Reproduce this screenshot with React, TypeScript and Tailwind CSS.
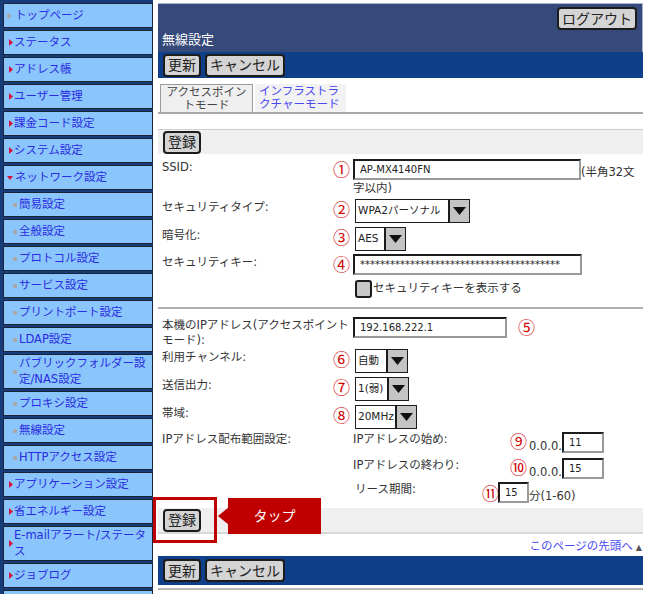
import React from "react";

type MenuKind = "top" | "main" | "open" | "sub" | "none";

const menu: { label: React.ReactNode; kind: MenuKind }[] = [
  { label: "トップページ", kind: "top" },
  { label: "ステータス", kind: "main" },
  { label: "アドレス帳", kind: "main" },
  { label: "ユーザー管理", kind: "main" },
  { label: "課金コード設定", kind: "main" },
  { label: "システム設定", kind: "main" },
  { label: "ネットワーク設定", kind: "open" },
  { label: "簡易設定", kind: "sub" },
  { label: "全般設定", kind: "sub" },
  { label: "プロトコル設定", kind: "sub" },
  { label: "サービス設定", kind: "sub" },
  { label: "プリントポート設定", kind: "sub" },
  { label: "LDAP設定", kind: "sub" },
  { label: <>パブリックフォルダー設<br />定/NAS設定</>, kind: "sub" },
  { label: "プロキシ設定", kind: "sub" },
  { label: "無線設定", kind: "sub" },
  { label: "HTTPアクセス設定", kind: "sub" },
  { label: "アプリケーション設定", kind: "main" },
  { label: "省エネルギー設定", kind: "main" },
  { label: <>E-mailアラート/ステータ<br />ス</>, kind: "main" },
  { label: "ジョブログ", kind: "main" },
  // cut off by the bottom edge
  { label: "", kind: "none" },
];

const Bullet = ({ kind }: { kind: MenuKind }) => {
  if (kind === "none") return null;
  if (kind === "main")
    return (
      <svg width="4" height="7" viewBox="0 0 4 7" className="ml-[5px] mr-[1px] shrink-0">
        <polygon points="0,0 4,3.5 0,7" fill="#d4103c" />
      </svg>
    );
  if (kind === "open")
    return (
      <svg width="6" height="4" viewBox="0 0 6 4" className="ml-[3px] mr-[2px] shrink-0">
        <polygon points="0,0 6,0 3,4" fill="#d4103c" />
      </svg>
    );
  return (
    <span
      className={`shrink-0 w-[4px] h-[4px] bg-[#a8a8a8] rounded-[1px] ${
        kind === "sub" ? "ml-[9px] mr-[2px]" : "ml-[3px] mr-[4px]"
      }`}
    />
  );
};

const Btn = ({ children }: { children: React.ReactNode }) => (
  <div className="h-[23px] px-[3px] flex items-center bg-[#d4d4d4] border-2 border-[#1c1c1c] rounded-[4px] text-[14px] leading-none text-[#222]">
    {children}
  </div>
);

const Num = ({ n }: { n: string }) => (
  <span className="text-[17px] leading-[16px] text-[#d00000] font-['Noto_Sans_CJK_JP',sans-serif]">{n}</span>
);

const TextBox = ({ w, value }: { w: string; value: string }) => (
  <div
    className={`${w} h-[21px] bg-white border-2 border-t-[#1c1c1c] border-l-[#1c1c1c] border-r-[#9a9a9a] border-b-[#9a9a9a] px-[5px] text-[10px] leading-[17px] text-[#222] overflow-hidden whitespace-nowrap`}
  >
    {value}
  </div>
);

const SelectBox = ({ w, value }: { w: string; value: string }) => (
  <div className={`${w} h-[24px] flex bg-white border border-[#1c1c1c]`}>
    <div className="flex-1 px-[2px] flex items-center text-[10.5px] text-[#222] whitespace-nowrap overflow-hidden">{value}</div>
    <div className="w-[21px] bg-[#c4c4c4] border-l-2 border-[#1c1c1c] flex items-center justify-center">
      <svg width="13" height="8" viewBox="0 0 13 8">
        <polygon points="0,0 13,0 6.5,8" fill="#111" />
      </svg>
    </div>
  </div>
);

const Row = ({
  label,
  num,
  h,
  children,
}: {
  label?: React.ReactNode;
  num?: string;
  h: string;
  children?: React.ReactNode;
}) => (
  <div className={`flex ${h}`}>
    <div className="w-[171px] pt-[1px] text-[11.5px] leading-[15px] text-[#333] whitespace-nowrap">{label}</div>
    <div className="w-[20px]">{num && <Num n={num} />}</div>
    <div className="flex-1">{children}</div>
  </div>
);

export default function App() {
  return (
    <div className="w-[647px] h-[594px] overflow-hidden bg-white flex font-['DejaVu_Sans','Noto_Sans_CJK_JP',sans-serif]">
      {/* side menu */}
      <div className="w-[153px] shrink-0 bg-[#173c7a] pl-[3px] pt-[3px] flex flex-col gap-[2px]">
        {menu.map((m, i) => (
          <div
            key={i}
            className="shrink-0 min-h-[25px] py-[1px] flex items-center bg-[#8ac6fc] border border-[#1a2438] text-[11.5px] leading-[15.5px] text-[#2c2ce0]"
          >
            <Bullet kind={m.kind} />
            <span className="whitespace-nowrap">{m.label}</span>
          </div>
        ))}
      </div>

      {/* main */}
      <div className="w-[485px] ml-[5px] pt-[3px] flex flex-col">
        <div className="h-[49px] bg-[#354a7a] border-t border-r border-[#a8b4cc] flex flex-col justify-between">
          <div className="flex justify-end pt-[3px] pr-[5px]">
            <Btn>ログアウト</Btn>
          </div>
          <div className="pl-[4px] pb-[3px] text-[13px] text-white">無線設定</div>
        </div>
        <div className="h-[26px] bg-[#0f3f89] flex items-center gap-[4px] pl-[5px]">
          <Btn>更新</Btn>
          <Btn>キャンセル</Btn>
        </div>

        {/* tabs */}
        <div className="mt-[6px] h-[30px] flex items-end border-b-2 border-[#a8a8a8] pl-[2px] gap-[2px]">
          <div className="w-[93px] h-[28px] bg-[#efefef] border border-b-0 border-[#9a9a9a] text-center text-[11.5px] leading-[13px] text-[#444] pt-[1px]">
            アクセスポイン
            <br />
            トモード
          </div>
          <div className="w-[91px] h-[28px] bg-[#f2f2f2] text-[11.5px] leading-[13px] text-[#4848f4] pl-[4px] pt-[1px]">
            インフラストラ
            <br />
            クチャーモード
          </div>
        </div>

        <div className="mt-[15px] h-[25px] bg-[#efefef] border-t border-[#cfcfcf] pl-[5px] flex items-center">
          <Btn>登録</Btn>
        </div>

        {/* form */}
        <div className="mt-[5px] pl-[4px] flex flex-col">
          <Row label="SSID:" num="①" h="h-[40px]">
            <div className="flex items-end">
              <TextBox w="w-[228px]" value="AP-MX4140FN" />
              <span className="text-[11.5px] leading-[15px] text-[#333]">(半角32文</span>
            </div>
            <div className="text-[11.5px] leading-[17px] text-[#333]">字以内)</div>
          </Row>
          <Row label="セキュリティタイプ:" num="②" h="h-[28px]">
            <div className="pl-[2px]">
              <SelectBox w="w-[115px]" value="WPA2パーソナル" />
            </div>
          </Row>
          <Row label="暗号化:" num="③" h="h-[27px]">
            <div className="pl-[2px]">
              <SelectBox w="w-[51px]" value="AES" />
            </div>
          </Row>
          <Row label="セキュリティキー:" num="④" h="h-[25px]">
            <TextBox w="w-[229px]" value="****************************************" />
          </Row>
          <Row h="h-[22px]">
            <div className="pl-[2px] pt-[1px] flex items-center gap-[1px]">
              <div className="w-[17px] h-[18px] bg-[#c8c8c8] border-2 border-[#1c1c1c] rounded-[3px]" />
              <span className="text-[11.5px] text-[#333]">セキュリティキーを表示する</span>
            </div>
          </Row>
        </div>

        <div className="mt-[6px] h-[2px] bg-[#b0b0b0]" />

        <div className="mt-[8px] pl-[4px] flex flex-col">
          <div className="flex h-[32px]">
            <div className="w-[191px] pt-[1px] text-[11.5px] leading-[15px] text-[#333] whitespace-nowrap">
              本機のIPアドレス(アクセスポイント
              <br />
              モード):
            </div>
            <TextBox w="w-[154px]" value="192.168.222.1" />
            <div className="ml-[11px]">
              <Num n="⑤" />
            </div>
          </div>
          <Row label="利用チャンネル:" num="⑥" h="h-[28px]">
            <div className="pl-[2px]">
              <SelectBox w="w-[53px]" value="自動" />
            </div>
          </Row>
          <Row label="送信出力:" num="⑦" h="h-[28px]">
            <div className="pl-[2px]">
              <SelectBox w="w-[54px]" value="1(弱)" />
            </div>
          </Row>
          <Row label="帯域:" num="⑧" h="h-[26px]">
            <div className="pl-[2px]">
              <SelectBox w="w-[62px]" value="20MHz" />
            </div>
          </Row>
          <div className="flex h-[26px]">
            <div className="w-[191px] pt-[1px] text-[11.5px] leading-[15px] text-[#333]">IPアドレス配布範囲設定:</div>
            <div className="w-[157px] pt-[1px] text-[11.5px] leading-[15px] text-[#333]">IPアドレスの始め:</div>
            <div className="w-[19px]">
              <Num n="⑨" />
            </div>
            <div className="flex items-end h-[22px]">
              <span className="text-[11.5px] leading-[14px] text-[#333]">0.0.0.</span>
              <TextBox w="w-[42px]" value="11" />
            </div>
          </div>
          <div className="flex h-[24px]">
            <div className="w-[191px]" />
            <div className="w-[157px] pt-[1px] text-[11.5px] leading-[15px] text-[#333]">IPアドレスの終わり:</div>
            <div className="w-[19px]">
              <Num n="⑩" />
            </div>
            <div className="flex items-end h-[22px]">
              <span className="text-[11.5px] leading-[14px] text-[#333]">0.0.0.</span>
              <TextBox w="w-[42px]" value="15" />
            </div>
          </div>
          <div className="flex h-[26px]">
            <div className="w-[193px]" />
            <div className="w-[127px] pt-[1px] text-[11.5px] leading-[15px] text-[#333]">リース期間:</div>
            <div className="w-[16px] pt-[2px]">
              <Num n="⑪" />
            </div>
            <div className="flex items-end h-[22px]">
              <TextBox w="w-[31px]" value="15" />
              <span className="text-[11.5px] leading-[14px] text-[#333]">分(1-60)</span>
            </div>
          </div>
        </div>

        <div className="relative mt-[1px] h-[26px] bg-[#efefef] border-b-2 border-[#d8d8d8] pl-[5px] flex items-center">
          <Btn>登録</Btn>
          <div className="absolute left-[-5px] top-[-11px] w-[64px] h-[46px] border-[3px] border-[#c00000]" />
          <svg width="11" height="18" viewBox="0 0 11 18" className="absolute left-[60px] top-[-1px]">
            <polygon points="11,0 11,18 0,9" fill="#c00000" />
          </svg>
          <div className="absolute left-[70px] top-[-10px] w-[93px] h-[36px] bg-[#c00000] flex items-center justify-center text-[14px] text-white">
            タップ
          </div>
        </div>

        <div className="h-[22px] flex items-end pb-[1px] justify-end pr-[1px] text-[11.5px]">
          <span className="text-[#4848f4]">このページの先頭へ</span>
          <span className="ml-[3px] mb-[1px] text-[8px] text-[#555]">▲</span>
        </div>

        <div className="h-[29px] bg-[#0f3f89] flex items-center gap-[4px] pl-[5px]">
          <Btn>更新</Btn>
          <Btn>キャンセル</Btn>
        </div>
        <div className="mt-[3px] h-[2px] bg-[#b8b8b8]" />
      </div>
    </div>
  );
}
